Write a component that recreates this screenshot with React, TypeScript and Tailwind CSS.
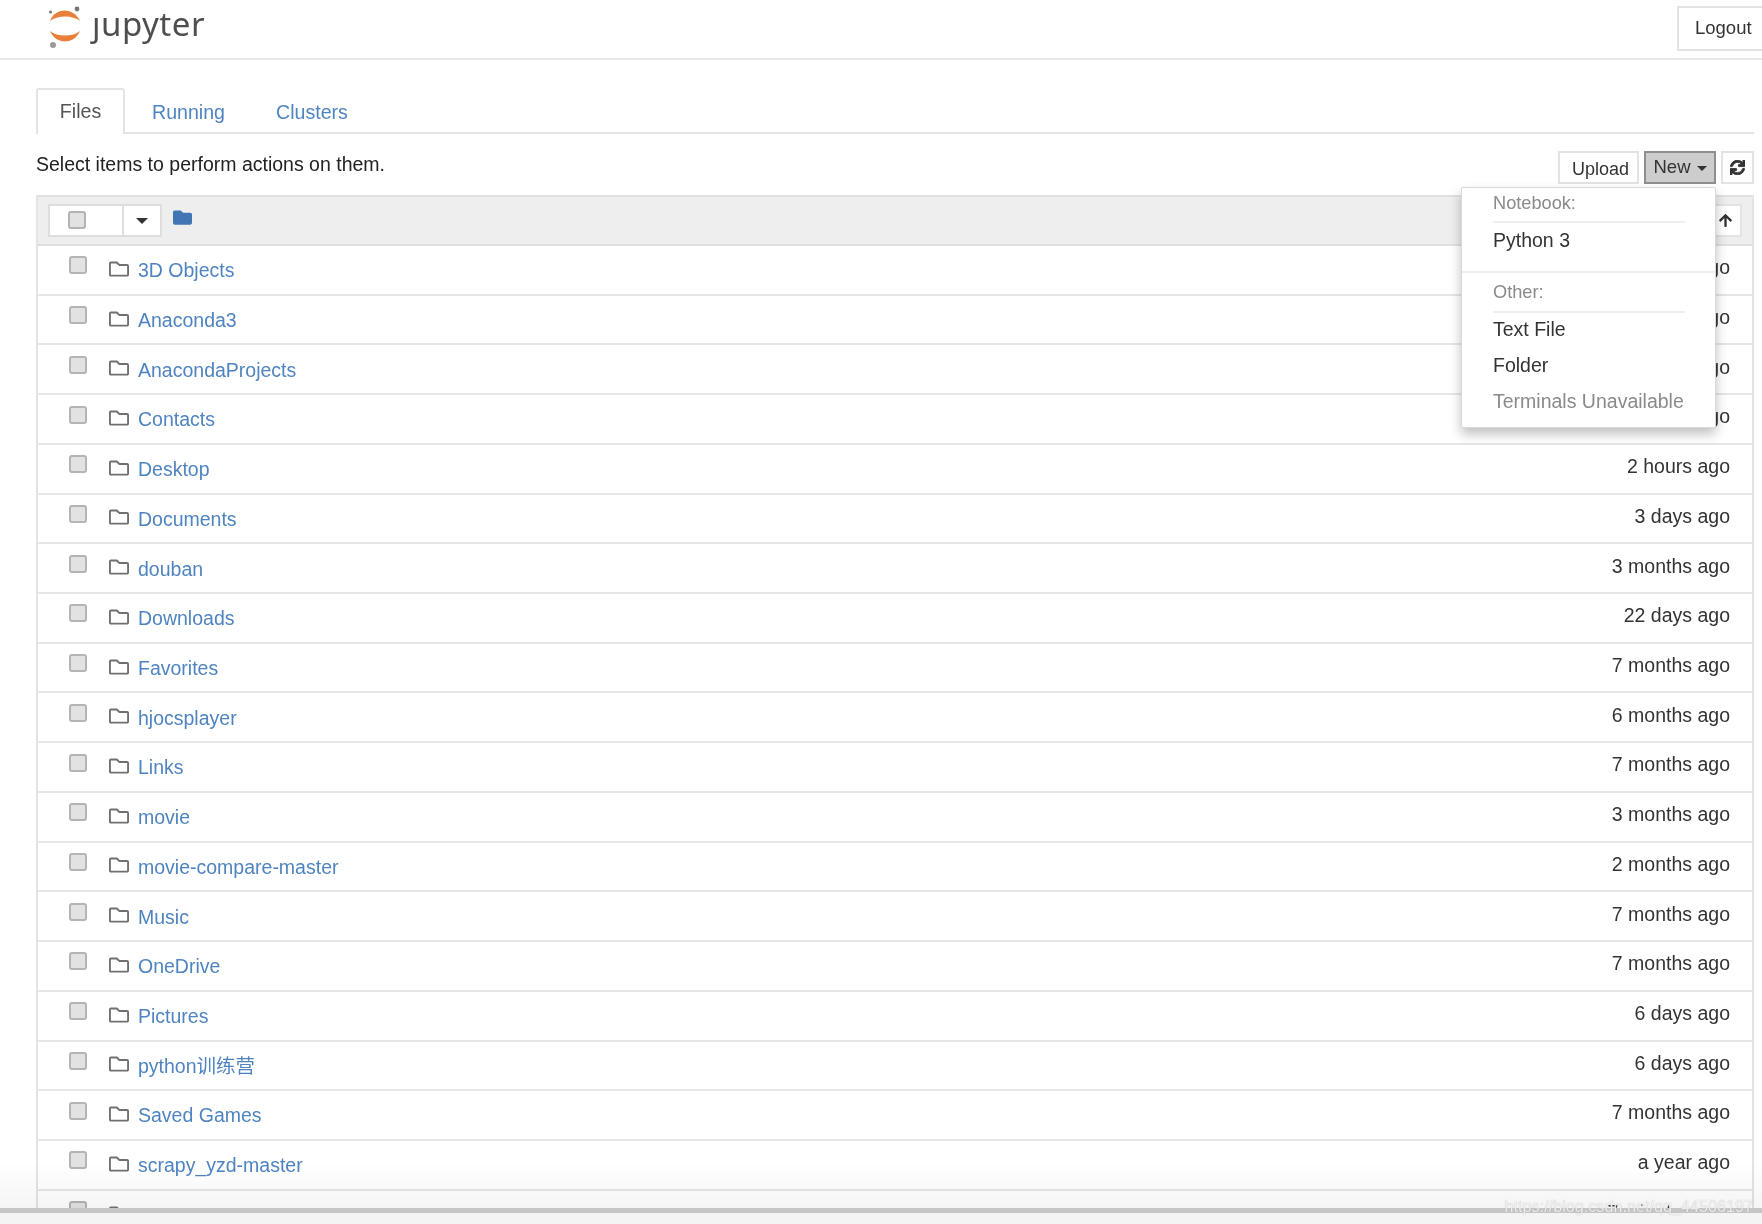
import { FaArrowUp, FaFolder, FaRegFolder, FaSync } from "react-icons/fa";

const rows = [
  ["3D Objects", "a day ago"],
  ["Anaconda3", "a day ago"],
  ["AnacondaProjects", "a day ago"],
  ["Contacts", "a day ago"],
  ["Desktop", "2 hours ago"],
  ["Documents", "3 days ago"],
  ["douban", "3 months ago"],
  ["Downloads", "22 days ago"],
  ["Favorites", "7 months ago"],
  ["hjocsplayer", "6 months ago"],
  ["Links", "7 months ago"],
  ["movie", "3 months ago"],
  ["movie-compare-master", "2 months ago"],
  ["Music", "7 months ago"],
  ["OneDrive", "7 months ago"],
  ["Pictures", "6 days ago"],
  ["python训练营", "6 days ago"],
  ["Saved Games", "7 months ago"],
  ["scrapy_yzd-master", "a year ago"],
  ["src", "7 minutes ago"],
];

function Check() {
  return <span className="block w-[18px] h-[18px] rounded-[3px] border-2 border-[#b4b4b4] bg-[#e2e2e2]" />;
}

function Logo() {
  return (
    <svg width="34" height="44" viewBox="0 0 34 44" className="shrink-0">
      <path d="M2 17 C7 3 26 3 32 17 C25 11 9 11 2 17 Z" fill="#e8803a" />
      <path d="M2 27 C8 41 26 41 32 27 C25 33 9 33 2 27 Z" fill="#e8803a" />
      <circle cx="29" cy="5" r="2.4" fill="#767677" />
      <circle cx="2.5" cy="8" r="1.5" fill="#767677" />
      <circle cx="5" cy="41" r="3" fill="#9a9a9a" />
    </svg>
  );
}

export default function App() {
  return (
    <div className="relative h-[1224px] overflow-hidden bg-white font-['Liberation_Sans','Noto_Sans_CJK_SC',sans-serif] text-[19.5px] text-[#333]">
      <header className="flex h-[60px] items-start justify-between border-b-2 border-[#e7e7e7] pl-[48px]">
        <div className="flex items-center gap-[10px] pt-[4px]">
          <Logo />
          <span aria-label="jupyter" className="font-['Noto_Sans',sans-serif] text-[33px] leading-[40px] text-[#4e4e4e] tracking-[0.5px] -mt-[5px]">ȷupyter</span>
        </div>
        <button className="mt-[6px] flex h-[45px] w-[85px] items-center pl-[16px] pb-[2px] border-2 border-r-0 border-[#e3e3e3] text-[18.5px]">Logout</button>
      </header>

      <main className="pl-[36px] pr-[8px] pt-[28px]">
        <nav className="flex h-[46px] border-b-2 border-[#e4e4e4] text-[19.6px] leading-[23px]">
          <div className="h-[46px] w-[89px] rounded-t-[3px] border-2 border-b-0 border-[#e4e4e4] bg-white pt-[10px] text-center text-[#555]">Files</div>
          <div className="pl-[27px] pt-[13px] text-[#4f84c0]">Running</div>
          <div className="pl-[51px] pt-[13px] text-[#4f84c0]">Clusters</div>
        </nav>

        <div className="flex h-[62px] items-start justify-between">
          <p className="pt-[19px] text-[19.5px] leading-[22px] text-[#222]">Select items to perform actions on them.</p>
          <div className="flex gap-[5px] pt-[17px]">
            <button className="h-[33px] w-[81px] border-2 border-[#e3e3e3] pl-[4px] pt-[2px] text-[18px] leading-[26px]">Upload</button>
            <button className="flex h-[33px] w-[72px] items-center justify-center gap-[6px] border-2 border-[#8f8f8f] bg-[#cdcdcd] pb-[2px] text-[18.5px]">
              New
              <span className="mt-[3px] border-x-[5px] border-t-[5px] border-x-transparent border-t-[#333]" />
            </button>
            <button className="flex h-[33px] w-[33px] items-center justify-center border-2 border-[#e3e3e3]">
              <FaSync size={15} stroke="currentColor" strokeWidth={30} />
            </button>
          </div>
        </div>

        <section className="border-x-2 border-[#e4e4e4]">
          <div className="flex h-[51px] items-center justify-between border-y-2 border-[#e0e0e0] bg-[#eeeeee] -mt-[1px] pl-[10px] pr-[10px]">
            <div className="flex items-center">
              <div className="flex h-[33px] w-[114px] border-2 border-[#dedede] bg-white -mt-[1px]">
                <div className="flex w-[74px] items-center border-r-2 border-[#dedede] pl-[18px]">
                  <Check />
                </div>
                <div className="flex flex-1 items-center justify-center pt-[2px]">
                  <span className="border-x-[6px] border-t-[6px] border-x-transparent border-t-[#333]" />
                </div>
              </div>
              <FaFolder size={19} className="ml-[11px] -mt-[6px] text-[#3f76b3]" />
            </div>
            <button className="flex h-[33px] w-[34px] items-center justify-center border-2 border-[#e3e3e3] bg-white">
              <FaArrowUp size={15} />
            </button>
          </div>

          {rows.map(([name, modified]) => (
            <div key={name} className="flex h-[49.72px] items-center justify-between border-b-2 border-[#e6e6e6] pr-[22px]">
              <div className="flex items-center">
                <span className="ml-[31px] -mt-[9px]"><Check /></span>
                <FaRegFolder size={20} className="ml-[22px] -mt-[2px] text-[#707070]" />
                <span className="ml-[9px] pt-[2px] text-[#4f84c0]">{name}</span>
              </div>
              <span className="-mt-[4px] text-[#333]">{modified}</span>
            </div>
          ))}
        </section>
      </main>

      <div className="absolute left-[1461px] top-[187px] h-[241px] w-[255px] rounded-[2px] border border-[#d9d9d9] bg-white text-[19.5px] shadow-[0_6px_12px_rgba(0,0,0,0.25)]">
        <div className="ml-[31px] mr-[30px] border-b-2 border-[#eeeeee] pb-[7px] pt-[4px] text-[18.2px] leading-[22px] text-[#8a8a8a]">Notebook:</div>
        <div className="pl-[31px] pt-[6px] leading-[22px]">Python 3</div>
        <div className="mt-[20px] border-b-2 border-[#eeeeee]" />
        <div className="ml-[31px] mr-[30px] border-b-2 border-[#eeeeee] pb-[8px] pt-[8px] text-[18.2px] leading-[22px] text-[#8a8a8a]">Other:</div>
        <div className="pl-[31px] pt-[5px] leading-[22px]">Text File</div>
        <div className="pl-[31px] pt-[14px] leading-[22px]">Folder</div>
        <div className="pl-[31px] pt-[14px] leading-[22px] text-[#8a8a8a]">Terminals Unavailable</div>
      </div>

      <div className="pointer-events-none absolute inset-x-0 bottom-[16px] h-[45px] bg-gradient-to-b from-white to-[#f5f5f5] mix-blend-multiply" />
      <div className="absolute inset-x-0 bottom-0 h-[16px] border-t-[5px] border-[#c6c6c6] bg-[#f4f4f4]" />
      <div className="absolute right-[9px] top-[1195px] text-[16.2px] leading-[22px] text-white/80 [text-shadow:0_0_1px_rgba(120,120,120,0.6)]">https://blog.csdn.net/qq_44506197</div>
    </div>
  );
}
